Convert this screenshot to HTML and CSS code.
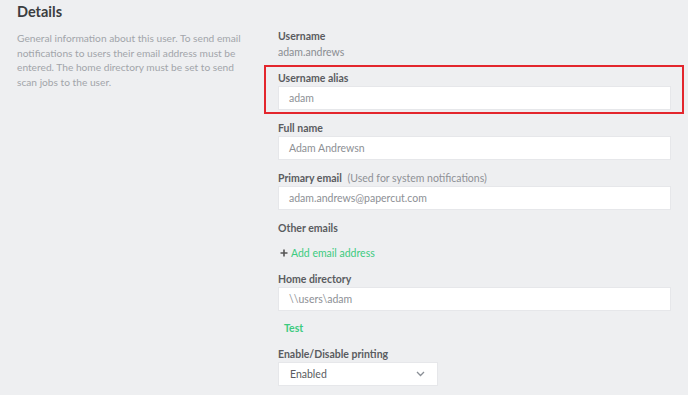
FILE: index.html
```html
<!DOCTYPE html>
<html lang="en">
  <head>
    <meta charset="UTF-8" />
    <meta name="viewport" content="width=device-width, initial-scale=1.0" />
    <title>User details</title>
    <link rel="stylesheet" href="styles.css">
  </head>
  <body>
    <div class="details">
      <div class="intro">
        <h2>Details</h2>
        <p>
          General information about this user. To send email notifications to
          users their email address must be entered. The home directory must be
          set to send scan jobs to the user.
        </p>
      </div>

      <div class="fields">
        <div class="field">
          <span class="label">Username</span>
          <span class="static">adam.andrews</span>
        </div>

        <div class="field highlight">
          <span class="label">Username alias</span>
          <div class="input">adam</div>
        </div>

        <div class="field">
          <span class="label">Full name</span>
          <div class="input">Adam Andrewsn</div>
        </div>

        <div class="field">
          <span class="label">Primary email <span class="hint">(Used for system notifications)</span></span>
          <div class="input">adam.andrews@papercut.com</div>
        </div>

        <div class="field">
          <span class="label">Other emails</span>
          <a class="add-link">
            <svg width="8" height="8" viewBox="0 0 8 8">
              <path d="M4 0.5v7M0.5 4h7" stroke="#555" stroke-width="1.6" />
            </svg>
            Add email address
          </a>
        </div>

        <div class="field spaced">
          <span class="label">Home directory</span>
          <div class="input">\\users\adam</div>
          <a class="test-link">Test</a>
        </div>

        <div class="field spaced">
          <span class="label">Enable/Disable printing</span>
          <div class="select">
            Enabled
            <svg width="9" height="6" viewBox="0 0 9 6">
              <path d="M1 1l3.5 3.5L8 1" fill="none" stroke="#8a8f96" stroke-width="1.3" />
            </svg>
          </div>
        </div>
      </div>
    </div>
  </body>
</html>
```

FILE: styles.css
```css
body {
  font-family: "Lato", "Open Sans", sans-serif;
  background-color: #eeeff1;
  margin: 0;
  padding: 0;
  color: #555;
}
.details {
  display: flex;
  padding: 3px 16px 0 17px;
}
.intro {
  width: 236px;
  flex-shrink: 0;
}
h2 {
  margin: 0;
  font-size: 14.5px;
  line-height: 18px;
  font-weight: 700;
  color: #3b3d40;
}
p {
  margin: 10px 0 0;
  font-size: 10.2px;
  line-height: 14.6px;
  color: #a2a5aa;
}
.fields {
  margin-left: 25px;
  width: 393px;
  padding-top: 26px;
  display: flex;
  flex-direction: column;
  gap: 11px;
}
.field {
  display: flex;
  flex-direction: column;
}
.spaced {
  margin-top: 1px;
}
.label {
  font-size: 10.5px;
  line-height: 14px;
  font-weight: 700;
  color: #5a5c60;
}
.hint {
  font-weight: 400;
  color: #8e9196;
  margin-left: 3px;
}
.static {
  margin-top: 2px;
  font-size: 10.5px;
  line-height: 14px;
  color: #8a8d92;
}
.highlight {
  margin: -5px -13px -4px -14px;
  padding: 4px 11px 2px 12px;
  border: 2px solid #e3262d;
}
.input {
  margin-top: 1px;
  height: 24px;
  box-sizing: border-box;
  padding: 0 10px;
  display: flex;
  align-items: center;
  background-color: white;
  border: 1px solid #e6e7ea;
  font-size: 10.5px;
  color: #8d9095;
}
.add-link {
  margin-top: 11px;
  display: flex;
  align-items: center;
  gap: 3px;
  padding-left: 2px;
  font-size: 10.5px;
  line-height: 14px;
  color: #3ccb7f;
}
.test-link {
  margin-top: 10px;
  padding-left: 6px;
  font-size: 10.5px;
  line-height: 14px;
  font-weight: 700;
  color: #3ccb7f;
}
.select {
  margin-top: 1px;
  width: 160px;
  height: 24px;
  box-sizing: border-box;
  padding: 0 12px 0 11px;
  display: flex;
  align-items: center;
  justify-content: space-between;
  background-color: white;
  border: 1px solid #e6e7ea;
  font-size: 10.5px;
  color: #5a5c60;
}
```
